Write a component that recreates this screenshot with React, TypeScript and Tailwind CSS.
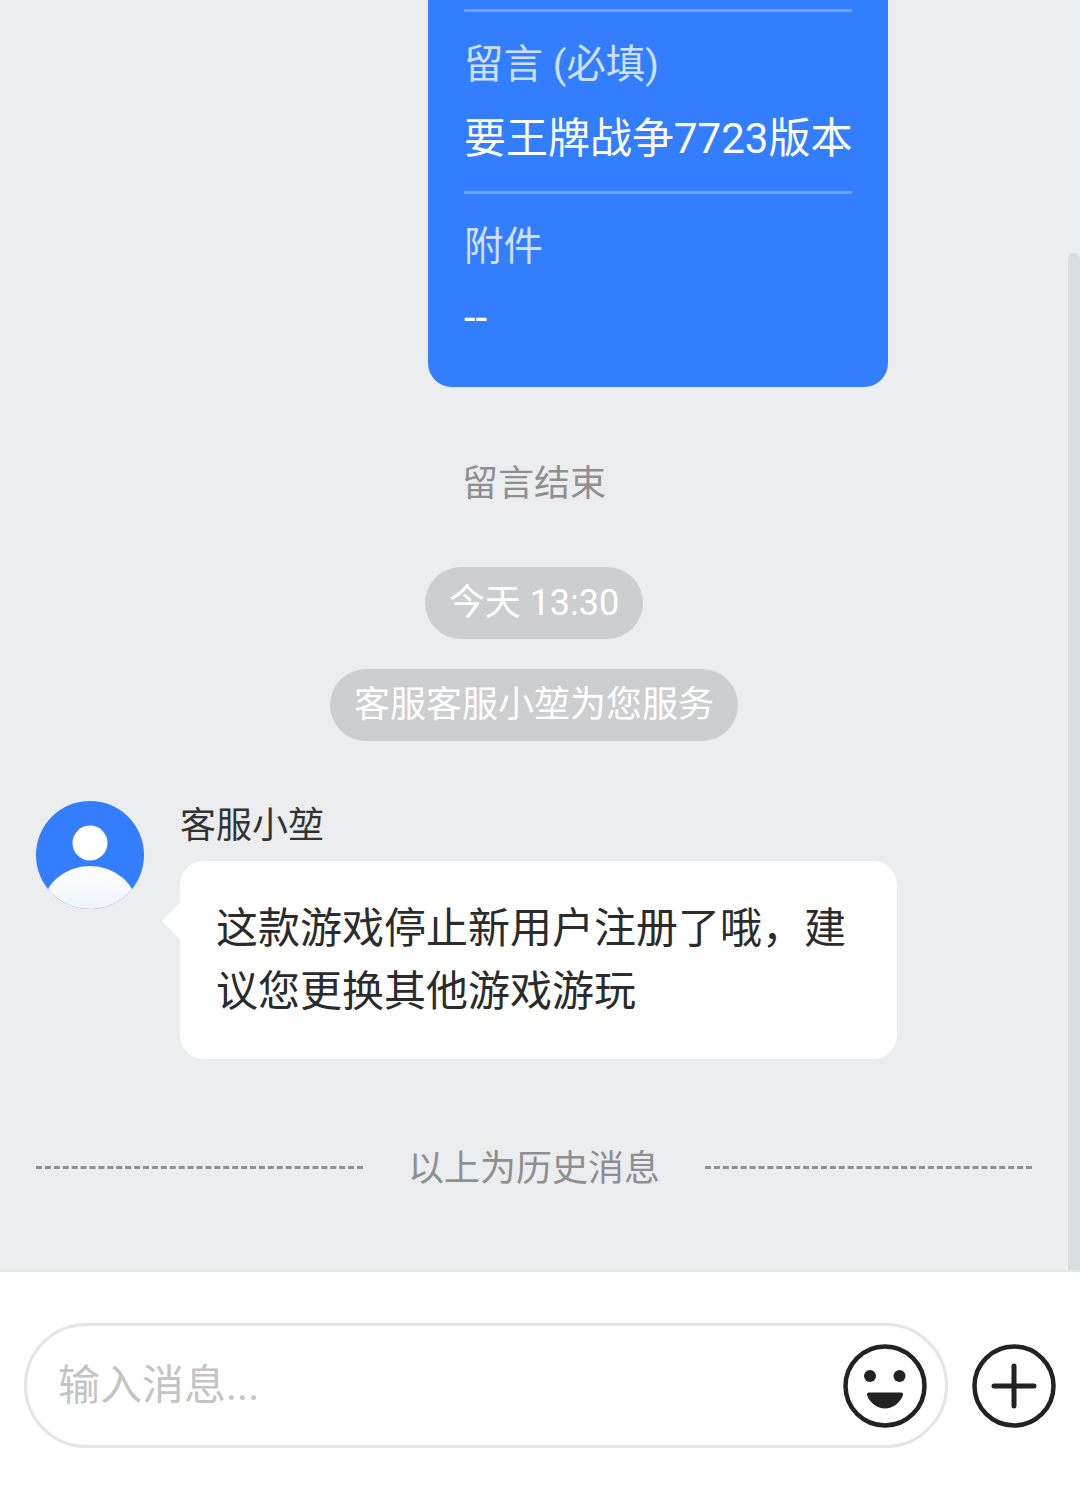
import React from "react";

const FONT = "font-['Roboto','Noto_Sans_CJK_SC',sans-serif]";

function Pill({ children }: { children: React.ReactNode }) {
  return (
    <div className="h-[72px] rounded-full bg-[#cdced0] px-6 flex items-center text-[36px] leading-[50px] text-white">
      {children}
    </div>
  );
}

function Avatar() {
  return (
    <svg width="108" height="108" viewBox="0 0 108 108" className="shrink-0">
      <defs>
        <clipPath id="av">
          <circle cx="54" cy="54" r="54" />
        </clipPath>
        <linearGradient id="body" x1="0" y1="0" x2="0" y2="1">
          <stop offset="0" stopColor="#ffffff" />
          <stop offset="0.55" stopColor="#edf3fd" />
        </linearGradient>
      </defs>
      <circle cx="54" cy="54" r="54" fill="#337dff" />
      <circle cx="54" cy="42" r="17.5" fill="#ffffff" />
      <ellipse cx="54" cy="107" rx="47" ry="42" fill="url(#body)" clipPath="url(#av)" />
    </svg>
  );
}

function Smile() {
  return (
    <svg width="84" height="84" viewBox="0 0 84 84" className="shrink-0">
      <circle cx="42" cy="42" r="39.5" fill="none" stroke="#222222" strokeWidth="4.5" />
      <circle cx="27" cy="32" r="6" fill="#222222" />
      <circle cx="56.500" cy="32" r="6" fill="#222222" />
      <path d="M26 48.500 H58 A2 2 0 0 1 60 51 C57 59 50 64.500 42 64.500 C34 64.500 27 59 24 51 A2 2 0 0 1 26 48.500 Z" fill="#222222" />
    </svg>
  );
}

function Plus() {
  return (
    <svg width="84" height="84" viewBox="0 0 84 84" className="shrink-0">
      <circle cx="42" cy="42" r="39.5" fill="none" stroke="#222222" strokeWidth="4.5" />
      <path d="M22 42 H62 M42 22 V62" fill="none" stroke="#222222" strokeWidth="5" strokeLinecap="round" />
    </svg>
  );
}

export default function App() {
  return (
    <div className={`${FONT} w-[1080px] h-[1500px] flex flex-col bg-white overflow-hidden`}>
      <div className="h-[1272px] flex bg-[#ecedef] border-b-2 border-[#e6e6e6]">
        <div className="w-[1068px] h-full overflow-hidden flex flex-col justify-end items-center pb-[76px]">
          {/* form card */}
          <div className="w-[460px] ml-[248px] shrink-0 bg-[#337dff] rounded-b-[24px] px-9 pt-10 pb-[39px]">
            <div className="border-t-[3px] border-[#6fa1ff] pt-[26px] pb-[22px]">
              <div className="text-[39.5px] leading-[54px] text-[#cfe0ff]">留言 (必填)</div>
              <div className="mt-[17px] text-[42px] leading-[60px] text-white whitespace-nowrap">要王牌战争7723版本</div>
            </div>
            <div className="border-t-[3px] border-[#6fa1ff] pt-[26px]">
              <div className="text-[39.5px] leading-[54px] text-[#cfe0ff]">附件</div>
              <div className="mt-[14px] text-[42px] leading-[60px] text-white">--</div>
            </div>
          </div>

          <div className="mt-[72px] text-[36px] leading-[50px] text-[#8f8f8f]">留言结束</div>

          <div className="mt-[58px]">
            <Pill>今天 13:30</Pill>
          </div>
          <div className="mt-[30px]">
            <Pill>客服客服小堃为您服务</Pill>
          </div>

          {/* agent message */}
          <div className="mt-[60px] w-full flex gap-9 pl-9">
            <Avatar />
            <div className="flex flex-col">
              <div className="pt-px text-[36px] leading-[48px] text-[#333333]">客服小堃</div>
              <div className="relative mt-[11px] w-[717px] rounded-[24px] bg-white p-9 text-[42px] leading-[63px] text-[#2b2b2b]">
                <div className="absolute -left-[13px] top-[47px] w-[26px] h-[26px] rotate-45 rounded-[2px] bg-white" />
                <div className="relative">这款游戏停止新用户注册了哦，建议您更换其他游戏游玩</div>
              </div>
            </div>
          </div>

          {/* history divider */}
          <div className="mt-[81px] w-full px-9 flex items-center justify-between">
            <div className="w-[327px] border-t-[3px] border-dashed border-[#8f8f8f]" />
            <div className="pt-1 text-[36px] leading-[50px] text-[#8f8f8f]">以上为历史消息</div>
            <div className="w-[327px] border-t-[3px] border-dashed border-[#8f8f8f]" />
          </div>
        </div>

        {/* scrollbar */}
        <div className="w-3 h-full pt-[253px]">
          <div className="w-full h-full rounded-t-[6px] bg-[#dcdddf]" />
        </div>
      </div>

      {/* input bar */}
      <div className="pt-[51px] px-6 flex items-center gap-6">
        <div className="w-[924px] h-[125px] rounded-full border-[3px] border-[#e5e5e5] pl-[31px] pr-[18px] flex items-center justify-between">
          <span className="text-[42px] leading-[60px] text-[#c4c4c4]">输入消息...</span>
          <Smile />
        </div>
        <Plus />
      </div>
    </div>
  );
}
